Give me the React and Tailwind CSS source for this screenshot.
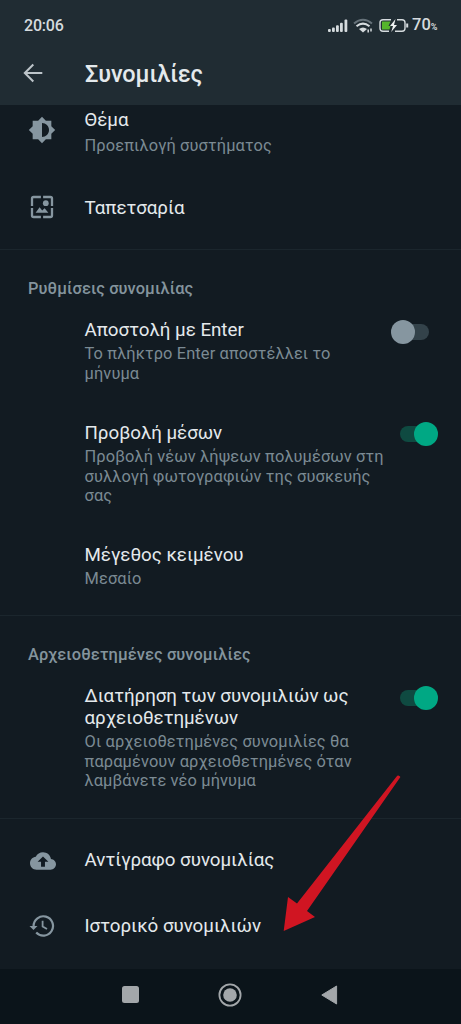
import React from "react";
import { MdBrightness6 } from "react-icons/md";

function Title({ children }) {
  return <div className="whitespace-pre text-[18.77px] leading-[22px] text-[#e4e9ec] tracking-[-0.03px]">{children}</div>;
}

function Sub({ children }) {
  return <div className="whitespace-pre text-[16.4px] leading-[19.7px] text-[#7b8a93] tracking-[0.12px]">{children}</div>;
}

function SectionTitle({ children }) {
  return <div className="pl-7 whitespace-pre text-[16.4px] font-medium leading-5 text-[#84949d] tracking-[0.08px]">{children}</div>;
}

function Switch({ on }) {
  return on ? (
    <span className="flex h-6 w-[38px] items-center justify-end rounded-full">
      <span className="-mr-5 h-4 w-[34px] rounded-full bg-[#0f4a41]" />
      <span className="z-10 h-6 w-6 rounded-full bg-[#00a884]" />
    </span>
  ) : (
    <span className="flex h-6 w-[38px] items-center">
      <span className="z-10 h-6 w-6 shrink-0 rounded-full bg-[#8696a0]" />
      <span className="-ml-5 h-4 w-[34px] shrink-0 rounded-full bg-[#33424a]" />
    </span>
  );
}

function WallpaperIcon() {
  return (
    <svg width="24" height="24" viewBox="0 0 24 24" fill="none" stroke="#8696a0" strokeWidth="2.3">
      <path d="M10.9 2H3.6Q2 2 2 3.6V10.9M13.1 2H20.4Q22 2 22 3.6V10.9M10.9 22H3.6Q2 22 2 20.4V13.1M13.1 22H20.4Q22 22 22 20.4V13.1" />
      <circle cx="15.8" cy="8.2" r="2.9" fill="#8696a0" stroke="none" />
      <path d="M5.6 17.8L9.6 12.3L12.2 15.6L14.6 13.2L18.4 17.8Z" fill="#8696a0" stroke="none" />
    </svg>
  );
}

function CloudIcon() {
  return (
    <svg width="26" height="26" viewBox="0 0 24 24">
      <path fill="#8696a0" d="M19.35 10.04C18.67 6.59 15.64 4 12 4 9.11 4 6.6 5.64 5.35 8.04 2.34 8.36 0 10.91 0 14c0 3.31 2.69 6 6 6h13c2.76 0 5-2.24 5-5 0-2.64-2.05-4.78-4.65-4.96z" />
      <path fill="#121b22" d="M12 7.8L17 12.8H13.8V17.2H10.2V12.8H7Z" />
    </svg>
  );
}

function HistoryIcon() {
  return (
    <svg width="26" height="24" viewBox="0 0 26 24" fill="none" stroke="#8696a0" strokeWidth="2.2">
      <path d="M4.6 13.2V12A9.7 9.7 0 1 1 7.2 18.6" />
      <path d="M13.6 6.8V12.4L18 15" strokeWidth="1.8" />
      <path d="M.5 12H8.5L4.5 16Z" fill="#8696a0" stroke="none" />
    </svg>
  );
}

function StatusIcons() {
  return (
    <svg width="84" height="18" viewBox="0 0 84 18" fill="none">
      <g fill="#d5dbde">
        <rect x="1" y="12" width="2.8" height="3" rx="1" />
        <rect x="5" y="10.5" width="2.8" height="4.5" rx="1" />
        <rect x="9" y="8.2" width="2.8" height="6.8" rx="1" />
        <rect x="13" y="5.8" width="2.8" height="9.2" rx="1" />
        <rect x="17.5" y="2.5" width="2.8" height="12.5" rx="1" />
      </g>
      <path d="M27 6.5Q36 -1 45 6.5" stroke="#66727a" strokeWidth="2" />
      <path d="M29.5 9.3Q36 4 42.5 9.3" stroke="#d5dbde" strokeWidth="2" />
      <path d="M32 12Q36 9 40 12L36 15.5Z" fill="#d5dbde" />
      <path d="M41.2 12.5V15.5M44 11.5V14.5" stroke="#d5dbde" strokeWidth="1.5" />
      <path d="M64 2.7H56Q53 2.7 53 5.7V11.3Q53 14.3 56 14.3H62M70 2.7H75Q78 2.7 78 5.7V11.3Q78 14.3 75 14.3H68" stroke="#d5dbde" strokeWidth="1.4" />
      <path d="M55 4.5H63.5L61.5 9H63.5L62.5 12.5H55Z" fill="#55b52c" />
      <path d="M68.5 2L63 8.9H66L64.2 15L70 7.9H67Z" fill="#eef1f2" />
      <path d="M80.2 6.5V10.5" stroke="#d5dbde" strokeWidth="2" />
    </svg>
  );
}

export default function App() {
  return (
    <div className="relative flex h-[1024px] w-[461px] flex-col overflow-hidden bg-[#121b22] font-['Roboto',sans-serif]">
      <header className="h-[105px] shrink-0 bg-[#202c33]">
        <div className="flex h-[50px] items-center pl-6 pr-[23.5px] pt-px text-[#d5dbde]">
          <span className="text-[16px] font-medium leading-5 tracking-[-0.2px]">20:06</span>
          <span className="ml-auto flex items-center">
            <StatusIcons />
            <span className="flex items-baseline pl-px pt-px text-[16.5px] font-medium leading-5">70<span className="text-[9px] font-bold">%</span></span>
          </span>
        </div>
        <div className="flex h-12 items-center pl-[23px]">
          <svg className="-mt-[3px]" width="20" height="20" viewBox="0 0 20 20" fill="none" stroke="#bcc4c9" strokeWidth="2">
            <path d="M19.3 10H2M10.3 1.5L1.8 10L10.3 18.5" />
          </svg>
          <h1 className="ml-[42px] text-[23.5px] font-medium leading-7 tracking-[-0.1px] text-[#e4e9ec]">Συνομιλίες</h1>
        </div>
      </header>

      <main className="flex h-[864px] shrink-0 flex-col">
        <section className="h-[145px] border-b border-[#1b262d]">
          <div className="flex h-[70px] pt-[4px]">
            <div className="w-[84.5px] pl-7 pt-[7px]"><MdBrightness6 size={28} color="#8696a0" /></div>
            <div className="flex flex-col gap-[4.5px]"><Title>Θέμα</Title><Sub>Προεπιλογή συστήματος</Sub></div>
          </div>
          <div className="flex h-16 items-center">
            <div className="w-[84.5px] pl-[30px]"><WallpaperIcon /></div>
            <div className="pt-px"><Title>Ταπετσαρία</Title></div>
          </div>
        </section>

        <section className="h-[366px] border-b border-[#1b262d] pt-[29px]">
          <SectionTitle>Ρυθμίσεις συνομιλίας</SectionTitle>
          <div className="mt-5 flex h-[103px] justify-between pl-[84.5px] pr-8">
            <div className="flex flex-col gap-[3px]"><Title>Αποστολή με Enter</Title><Sub>{"Το πλήκτρο Enter αποστέλλει το\nμήνυμα"}</Sub></div>
            <div className="pt-px"><Switch /></div>
          </div>
          <div className="flex h-[122px] justify-between pl-[84.5px] pr-[23px]">
            <div className="flex flex-col gap-[3px]"><Title>Προβολή μέσων</Title><Sub>{"Προβολή νέων λήψεων πολυμέσων στη\nσυλλογή φωτογραφιών της συσκευής\nσας"}</Sub></div>
            <div><Switch on /></div>
          </div>
          <div className="flex flex-col gap-[3px] pl-[84.5px]"><Title>Μέγεθος κειμένου</Title><Sub>Μεσαίο</Sub></div>
        </section>

        <section className="h-[203px] border-b border-[#1b262d] pt-[29px]">
          <SectionTitle>Αρχειοθετημένες συνομιλίες</SectionTitle>
          <div className="mt-5 flex justify-between pl-[84.5px] pr-[23px]">
            <div className="flex flex-col gap-[3px]"><Title>{"Διατήρηση των συνομιλιών ως\nαρχειοθετημένων"}</Title><Sub>{"Οι αρχειοθετημένες συνομιλίες θα\nπαραμένουν αρχειοθετημένες όταν\nλαμβάνετε νέο μήνυμα"}</Sub></div>
            <div className="pt-px"><Switch on /></div>
          </div>
        </section>

        <section className="pt-[8px]">
          <div className="flex h-[66px] items-center">
            <div className="w-[84.5px] pl-[29.5px] pt-px"><CloudIcon /></div>
            <Title>Αντίγραφο συνομιλίας</Title>
          </div>
          <div className="flex h-[66px] items-center">
            <div className="w-[84.5px] pl-[29px]"><HistoryIcon /></div>
            <Title>Ιστορικό συνομιλιών</Title>
          </div>
        </section>
      </main>

      <nav className="flex h-[55px] shrink-0 items-start bg-[#0b141a] pl-[122px] pt-3.5">
        <span className="mt-[3px] h-[17px] w-[17px] rounded-[2.5px] bg-[#a3a7aa]" />
        <svg className="ml-[79px]" width="24" height="24" viewBox="0 0 24 24">
          <circle cx="12" cy="12" r="10.6" fill="none" stroke="#a3a7aa" strokeWidth="1.8" />
          <circle cx="12" cy="12" r="6.8" fill="#a3a7aa" />
        </svg>
        <svg className="ml-[79px] mt-[2px]" width="17" height="20" viewBox="0 0 17 20">
          <path d="M.8 10L15.6 1V19Z" fill="#a3a7aa" stroke="#a3a7aa" strokeLinejoin="round" />
        </svg>
      </nav>

      <svg className="absolute left-[283px] top-[774px]" width="118" height="158" viewBox="0 0 118 158">
        <path d="M.7 157L5 123L14 129.5L114.2 1.8Q116 .8 117.4 3L24 137L32 143Z" fill="#d01522" />
      </svg>
    </div>
  );
}
